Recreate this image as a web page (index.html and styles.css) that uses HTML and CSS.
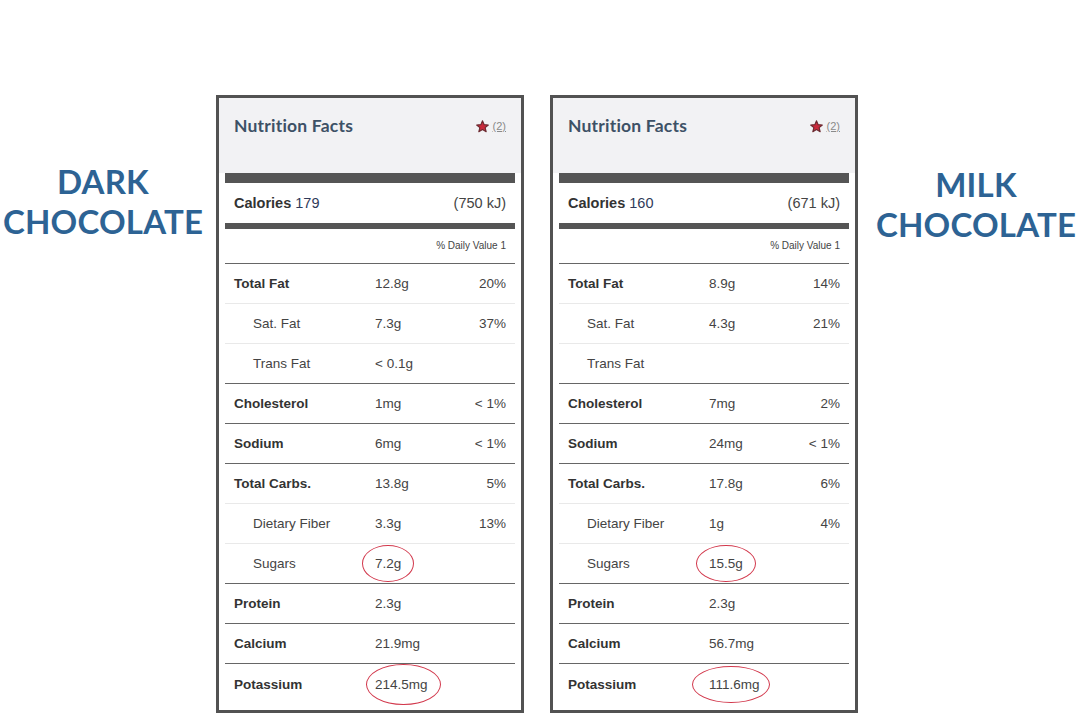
FILE: index.html
```html
<!DOCTYPE html>
<html lang="en">
<head>
<meta charset="utf-8">
<title>Dark vs Milk Chocolate Nutrition Facts</title>
<link rel="stylesheet" href="styles.css">
</head>
<body>
<div class="page">
  <div class="label label-left">DARK<br>CHOCOLATE</div>

  <div class="card">
    <div class="card-head">
      <div class="title">Nutrition Facts</div>
      <div class="head-tools">
        <svg class="star" width="13" height="13" viewBox="0 0 24 24"><path d="M12 1.5l3.1 7.1 7.7.6-5.9 5 1.9 7.5L12 17.6l-6.8 4.1 1.9-7.5-5.9-5 7.7-.6z" fill="#c92a3c" stroke="#6b2a30" stroke-width="2" stroke-linejoin="round"/></svg>
        <span class="help">(2)</span>
      </div>
    </div>
    <div class="card-body">
      <div class="bar-thick"></div>
      <div class="cal-row"><span><b>Calories</b> <span class="cal-num">179</span></span><span>(750 kJ)</span></div>
      <div class="bar-mid"></div>
      <div class="dv-row">% Daily Value 1</div>
      <div class="row light"><span class="name">Total Fat</span><span>12.8g</span><span class="pct">20%</span></div>
      <div class="row light"><span class="name sub">Sat. Fat</span><span>7.3g</span><span class="pct">37%</span></div>
      <div class="row"><span class="name sub">Trans Fat</span><span>&lt; 0.1g</span><span class="pct"></span></div>
      <div class="row"><span class="name">Cholesterol</span><span>1mg</span><span class="pct">&lt; 1%</span></div>
      <div class="row"><span class="name">Sodium</span><span>6mg</span><span class="pct">&lt; 1%</span></div>
      <div class="row light"><span class="name">Total Carbs.</span><span>13.8g</span><span class="pct">5%</span></div>
      <div class="row light"><span class="name sub">Dietary Fiber</span><span>3.3g</span><span class="pct">13%</span></div>
      <div class="row"><span class="name sub">Sugars</span><span><span class="ring ring-sm">7.2g</span></span><span class="pct"></span></div>
      <div class="row"><span class="name">Protein</span><span>2.3g</span><span class="pct"></span></div>
      <div class="row"><span class="name">Calcium</span><span>21.9mg</span><span class="pct"></span></div>
      <div class="row last"><span class="name">Potassium</span><span><span class="ring ring-lg">214.5mg</span></span><span class="pct"></span></div>
    </div>
  </div>

  <div class="card card-second">
    <div class="card-head">
      <div class="title">Nutrition Facts</div>
      <div class="head-tools">
        <svg class="star" width="13" height="13" viewBox="0 0 24 24"><path d="M12 1.5l3.1 7.1 7.7.6-5.9 5 1.9 7.5L12 17.6l-6.8 4.1 1.9-7.5-5.9-5 7.7-.6z" fill="#c92a3c" stroke="#6b2a30" stroke-width="2" stroke-linejoin="round"/></svg>
        <span class="help">(2)</span>
      </div>
    </div>
    <div class="card-body">
      <div class="bar-thick"></div>
      <div class="cal-row"><span><b>Calories</b> <span class="cal-num">160</span></span><span>(671 kJ)</span></div>
      <div class="bar-mid"></div>
      <div class="dv-row">% Daily Value 1</div>
      <div class="row light"><span class="name">Total Fat</span><span>8.9g</span><span class="pct">14%</span></div>
      <div class="row light"><span class="name sub">Sat. Fat</span><span>4.3g</span><span class="pct">21%</span></div>
      <div class="row"><span class="name sub">Trans Fat</span><span></span><span class="pct"></span></div>
      <div class="row"><span class="name">Cholesterol</span><span>7mg</span><span class="pct">2%</span></div>
      <div class="row"><span class="name">Sodium</span><span>24mg</span><span class="pct">&lt; 1%</span></div>
      <div class="row light"><span class="name">Total Carbs.</span><span>17.8g</span><span class="pct">6%</span></div>
      <div class="row light"><span class="name sub">Dietary Fiber</span><span>1g</span><span class="pct">4%</span></div>
      <div class="row"><span class="name sub">Sugars</span><span><span class="ring ring-sm">15.5g</span></span><span class="pct"></span></div>
      <div class="row"><span class="name">Protein</span><span>2.3g</span><span class="pct"></span></div>
      <div class="row"><span class="name">Calcium</span><span>56.7mg</span><span class="pct"></span></div>
      <div class="row last"><span class="name">Potassium</span><span><span class="ring ring-lg ring-wide">111.6mg</span></span><span class="pct"></span></div>
    </div>
  </div>

  <div class="label label-right">MILK<br>CHOCOLATE</div>
</div>
</body>
</html>
```
FILE: styles.css
```css
html, body {
  margin: 0;
  padding: 0;
  background: #ffffff;
}

.page {
  display: flex;
  align-items: flex-start;
  padding-top: 95px;
  width: 1080px;
  height: 717px;
  box-sizing: border-box;
  overflow: hidden;
}

.label {
  font-family: Lato, "Liberation Sans", sans-serif;
  font-weight: 700;
  font-size: 33px;
  line-height: 40px;
  color: #2d6394;
  text-align: center;
  letter-spacing: 0.2px;
}

.label-left {
  width: 216px;
  padding-right: 10px;
  box-sizing: border-box;
  margin-top: 66px;
}

.label-right {
  width: 222px;
  padding-left: 14px;
  box-sizing: border-box;
  margin-top: 69px;
}

.card {
  width: 308px;
  box-sizing: border-box;
  border: 3px solid #525252;
  background: #ffffff;
  font-family: "Liberation Sans", Arial, sans-serif;
  color: #3a3a3a;
}

.card-second {
  margin-left: 26px;
}

.card-head {
  height: 75px;
  box-sizing: border-box;
  background: #f2f2f4;
  padding: 18px 15px 0 15px;
  display: flex;
  justify-content: space-between;
  align-items: flex-start;
}

.title {
  font-family: Lato, "Liberation Sans", sans-serif;
  font-weight: 700;
  font-size: 17.5px;
  line-height: 20px;
  letter-spacing: 0.2px;
  color: #3d5166;
}

.head-tools {
  display: flex;
  align-items: center;
  gap: 4px;
  height: 20px;
}

.star {
  display: block;
}

.help {
  font-size: 11px;
  color: #8a8a8a;
  text-decoration: underline;
}

.card-body {
  padding: 0 6px 6px;
}

.bar-thick {
  height: 10px;
  background: #555555;
}

.bar-mid {
  height: 6px;
  background: #555555;
}

.cal-row {
  height: 40px;
  padding: 0 9px;
  display: flex;
  justify-content: space-between;
  align-items: center;
  font-size: 14.5px;
  color: #444;
}

.cal-row b {
  color: #333;
}

.cal-num {
  color: #2f3a5a;
}

.dv-row {
  height: 35px;
  box-sizing: border-box;
  border-bottom: 1px solid #666;
  padding: 0 9px;
  text-align: right;
  font-size: 10px;
  line-height: 34px;
  color: #444;
}

.row {
  height: 40px;
  box-sizing: border-box;
  border-bottom: 1px solid #666;
  padding: 0 9px;
  display: grid;
  grid-template-columns: 141px 1fr auto;
  align-items: center;
  font-size: 13.5px;
  color: #444;
}

.row.light {
  border-bottom-color: #e9e9e9;
}

.row.last {
  border-bottom: none;
}

.name {
  font-weight: 700;
  color: #333;
}

.name.sub {
  font-weight: 400;
  color: #444;
  padding-left: 19px;
}

.pct {
  text-align: right;
}

.ring {
  position: relative;
  display: inline-block;
}

.ring::before {
  content: "";
  position: absolute;
  border: 1px solid #d2384c;
  border-radius: 50%;
}

.ring-sm::before {
  left: -13px;
  right: -13px;
  top: -11px;
  bottom: -11px;
}

.ring-lg::before {
  left: -9px;
  right: -13px;
  top: -13px;
  bottom: -13px;
}

.ring-wide::before {
  left: -17px;
  right: -10px;
  top: -11px;
  bottom: -11px;
}
```
